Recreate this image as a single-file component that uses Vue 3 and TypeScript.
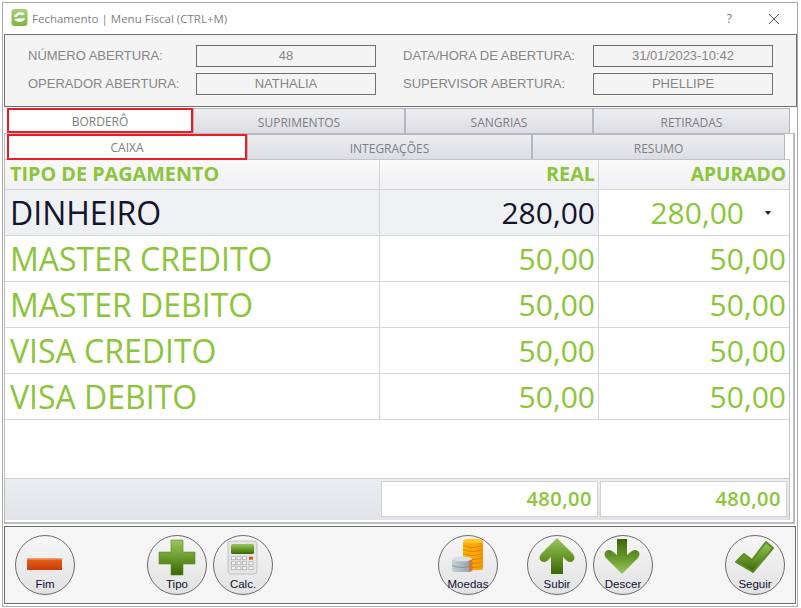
<script setup lang="ts">
interface Row { name: string; real: string; apurado: string }
const rows: Row[] = [
  { name: 'MASTER CREDITO', real: '50,00', apurado: '50,00' },
  { name: 'MASTER DEBITO', real: '50,00', apurado: '50,00' },
  { name: 'VISA CREDITO', real: '50,00', apurado: '50,00' },
  { name: 'VISA DEBITO', real: '50,00', apurado: '50,00' },
]
const tabs = [
  { label: 'BORDERÔ', w: 186, on: true },
  { label: 'SUPRIMENTOS', w: 212, on: false },
  { label: 'SANGRIAS', w: 188, on: false },
  { label: 'RETIRADAS', w: 197, on: false },
]
const subtabs = [
  { label: 'CAIXA', w: 240, on: true },
  { label: 'INTEGRAÇÕES', w: 285, on: false },
  { label: 'RESUMO', w: 253, on: false },
]
</script>

<template>
  <div class="page">
    <svg class="defs" width="0" height="0" aria-hidden="true">
      <defs>
        <linearGradient id="g" x1="0" y1="0" x2="0" y2="1">
          <stop offset="0" stop-color="#9cc65e" />
          <stop offset="0.5" stop-color="#689a2c" />
          <stop offset="1" stop-color="#3c6606" />
        </linearGradient>
        <linearGradient id="gd" x1="0" y1="0" x2="0" y2="1">
          <stop offset="0" stop-color="#3c6606" />
          <stop offset="0.55" stop-color="#689a2c" />
          <stop offset="1" stop-color="#9cc65e" />
        </linearGradient>
        <linearGradient id="r" x1="0" y1="0" x2="0" y2="1">
          <stop offset="0" stop-color="#e8641c" />
          <stop offset="1" stop-color="#c83c08" />
        </linearGradient>
        <linearGradient id="au" x1="0" y1="0" x2="1" y2="0">
          <stop offset="0" stop-color="#ffb400" />
          <stop offset="1" stop-color="#f79a0a" />
        </linearGradient>
        <linearGradient id="ag" x1="0" y1="0" x2="1" y2="0">
          <stop offset="0" stop-color="#c8d0d6" />
          <stop offset="1" stop-color="#8f9ea8" />
        </linearGradient>
        <linearGradient id="lg" x1="0" y1="0" x2="0" y2="1">
          <stop offset="0" stop-color="#a6d272" />
          <stop offset="1" stop-color="#7cb63e" />
        </linearGradient>
      </defs>
    </svg>
    <div class="window">
      <header class="title">
        <svg class="logo" width="17" height="17" viewBox="0 0 17 17">
          <rect width="16" height="17" x="0.5" rx="3" fill="url(#lg)" />
          <path d="M3 8 C4 3 11 2 14 5 L11 6.500 C9 5 6.500 6 6 8 Z M3 10 L14 9 C14 13 6 15 3 10 Z" fill="#fff" />
        </svg>
        <span class="title-text">Fechamento | Menu Fiscal (CTRL+M)</span>
        <span class="help">?</span>
        <svg class="close" width="12" height="12" viewBox="0 0 12 12">
          <path d="M1 1 L11 11 M11 1 L1 11" stroke="#666" stroke-width="1" fill="none" />
        </svg>
      </header>

      <section class="info">
        <span class="lbl l1">NÚMERO ABERTURA:</span>
        <span class="box">48</span>
        <span class="lbl l2">DATA/HORA DE ABERTURA:</span>
        <span class="box">31/01/2023-10:42</span>
        <span class="lbl l1">OPERADOR ABERTURA:</span>
        <span class="box">NATHALIA</span>
        <span class="lbl l2">SUPERVISOR ABERTURA:</span>
        <span class="box">PHELLIPE</span>
      </section>

      <nav class="tabs">
        <div v-for="t in tabs" :key="t.label" class="tab" :class="{ on: t.on }" :style="{ width: t.w + 'px' }">{{ t.label }}</div>
      </nav>

      <section class="outer">
        <nav class="subtabs">
          <div v-for="t in subtabs" :key="t.label" class="tab" :class="{ on: t.on }" :style="{ width: t.w + 'px' }">{{ t.label }}</div>
        </nav>
        <div class="grid">
          <div class="row head">
            <div class="cell a">TIPO DE PAGAMENTO</div>
            <div class="cell b">REAL</div>
            <div class="cell c">APURADO</div>
          </div>
          <div class="row body first">
            <div class="cell a">DINHEIRO</div>
            <div class="cell b">280,00</div>
            <div class="cell c edit"><span>280,00</span><i class="caret"></i></div>
          </div>
          <div v-for="r in rows" :key="r.name" class="row body">
            <div class="cell a">{{ r.name }}</div>
            <div class="cell b">{{ r.real }}</div>
            <div class="cell c">{{ r.apurado }}</div>
          </div>
          <div class="empty"></div>
          <div class="foot">
            <div class="total t1">480,00</div>
            <div class="total t2">480,00</div>
          </div>
        </div>
      </section>

      <footer class="actions">
        <button class="btn fim">
          <svg viewBox="0 0 60 60" width="60" height="60"><rect x="12" y="23" width="35" height="12" fill="url(#r)" /><rect x="12" y="23" width="35" height="1.500" fill="#f0a080" /></svg>
          <span>Fim</span>
        </button>
        <button class="btn tipo">
          <svg viewBox="0 0 60 60" width="60" height="60"><path d="M24 5 H36 V17 H48 V29 H36 V40 H24 V29 H12 V17 H24 Z" fill="url(#g)" stroke="#5d8c24" stroke-width="0.600" /></svg>
          <span>Tipo</span>
        </button>
        <button class="btn calc">
          <svg viewBox="0 0 60 60" width="60" height="60">
            <rect x="15" y="6" width="29" height="33" rx="3" fill="#e4e4e4" stroke="#c2c2c2" />
            <rect x="18" y="9" width="23" height="10" rx="1.500" fill="url(#g)" />
            <g fill="#f4f4f4" stroke="#a8a8a8" stroke-width="0.700">
              <rect x="18.500" y="21.700" width="4" height="3" /><rect x="24" y="21.700" width="4" height="3" /><rect x="29.500" y="21.700" width="4" height="3" />
              <rect x="18.500" y="26.700" width="4" height="3" /><rect x="24" y="26.700" width="4" height="3" /><rect x="29.500" y="26.700" width="4" height="3" /><rect x="36" y="26.700" width="4" height="3" />
              <rect x="18.500" y="31.700" width="4" height="3" /><rect x="24" y="31.700" width="4" height="3" /><rect x="29.500" y="31.700" width="4" height="3" /><rect x="36" y="31.700" width="4" height="3" />
            </g>
            <rect x="36" y="21.700" width="4" height="3" fill="#dd5a14" />
          </svg>
          <span>Calc.</span>
        </button>
        <button class="btn moedas">
          <svg viewBox="0 0 60 60" width="60" height="60">
            <rect x="25" y="6" width="20" height="29" rx="2" fill="url(#au)" />
            <ellipse cx="35" cy="6" rx="10" ry="2.500" fill="#ffc62e" />
            <path d="M25 10.500 q10 4 20 0 M25 14.500 q10 4 20 0 M25 18.500 q10 4 20 0 M25 22.500 q10 4 20 0 M25 26.500 q10 4 20 0 M25 30.500 q10 4 20 0" stroke="#d98400" stroke-width="1" fill="none" />
            <rect x="14" y="24" width="20" height="13" rx="2" fill="url(#ag)" />
            <ellipse cx="24" cy="24" rx="10" ry="2.500" fill="#d8dee2" />
            <path d="M14 30.500 q10 4 20 0" stroke="#7d8b95" stroke-width="0.800" fill="none" />
            <rect x="31" y="25" width="3.500" height="11" fill="#e56a1a" opacity="0.700" />
          </svg>
          <span>Moedas</span>
        </button>
        <button class="btn subir">
          <svg viewBox="0 0 60 60" width="60" height="60"><path d="M30 3 L46 19 Q49 23 46 26 Q43 28 40 26 L36 22 V39 H24 V22 L20 26 Q17 28 14 26 Q11 23 14 19 Z" fill="url(#g)" /></svg>
          <span>Subir</span>
        </button>
        <button class="btn descer">
          <svg viewBox="0 0 60 60" width="60" height="60"><path d="M24 4 H34 V20 L39 16 Q42 14 45 16 Q48 19 45 23 L29 39 L13 23 Q10 19 13 16 Q16 14 19 16 L24 20 Z" fill="url(#gd)" /></svg>
          <span>Descer</span>
        </button>
        <button class="btn seguir">
          <svg viewBox="0 0 60 60" width="60" height="60"><path d="M11 27 L19 19 L27 25 L41 7 L48 13 L28 37 Z" fill="url(#g)" stroke="#5d8c24" stroke-width="2" stroke-linejoin="round" /></svg>
          <span>Seguir</span>
        </button>
      </footer>
    </div>
  </div>
</template>

<style>
html, body { margin: 0; background: #fff; }
</style>

<style scoped>
.page {
  width: 801px;
  height: 608px;
  padding: 2px 3px 1px 2px;
  box-sizing: border-box;
  background: #fff;
  position: relative;
  overflow: hidden;
}
.defs { position: absolute; }
.window {
  height: 100%;
  box-sizing: border-box;
  border: 1px solid #ababab;
  padding: 0 0 2px 1px;
  display: flex;
  flex-direction: column;
}
.title {
  height: 31px;
  display: flex;
  align-items: center;
  padding-left: 7px;
  flex: none;
}
.logo { margin-bottom: 2px; }
.title-text {
  margin-left: 4px;
  font: 11.5px "Open Sans", sans-serif;
  color: #7f7f7f;
}
.help {
  margin-left: auto;
  font: 12px "Open Sans", sans-serif;
  color: #777;
}
.close { margin: 0 17px 0 36px; }
.info {
  flex: none;
  height: 73px;
  box-sizing: border-box;
  border: 1px solid #6f6f6f;
  background: #f4f4f4;
  display: grid;
  grid-template-columns: 168px 180px 217px 180px;
  grid-auto-rows: 22px;
  row-gap: 6px;
  padding: 10px 0 0 23px;
  font: 13px "Liberation Sans", sans-serif;
  color: #868686;
}
.lbl { line-height: 22px; white-space: nowrap; }
.l2 { padding-left: 27px; }
.box {
  border: 1px solid #6f6f6f;
  line-height: 20px;
  text-align: center;
}
.tabs {
  flex: none;
  display: flex;
  margin: 1px 0 0 3px;
  height: 25px;
  position: relative;
  z-index: 1;
}
.tab {
  box-sizing: border-box;
  flex: none;
  text-align: center;
  font: 12px/27px "Open Sans", sans-serif;
  color: #7d7d85;
  background: linear-gradient(#eeeef0, #dcdde2);
  border: 1px solid #b4b6c0;
  border-bottom: 0;
}
.tab.on {
  background: #fff;
  border: 2px solid #ed1c24;
  line-height: 23px;
  color: #7d7d7d;
}
.outer {
  flex: 1;
  min-height: 0;
  margin: 0 2px 2px 0;
  border: 1px solid #b9bac2;
  border-right-width: 2px;
  border-bottom-width: 2px;
  display: flex;
  flex-direction: column;
}
.subtabs {
  flex: none;
  display: flex;
  height: 25px;
  padding-left: 2px;
  position: relative;
  z-index: 1;
}
.subtabs .tab { height: 25px; line-height: 28px; }
.subtabs .tab.on { height: 26px; line-height: 23px; }
.grid {
  flex: 1;
  min-height: 0;
  margin: 0 3px 2px 0;
  border-top: 1px solid #c2c3cc;
  border-right: 1px solid #c2c3cc;
  display: flex;
  flex-direction: column;
  background: #fff;
  font-family: "Open Sans", sans-serif;
  color: #8ac53a;
}
.row {
  flex: none;
  box-sizing: border-box;
  display: grid;
  grid-template-columns: 374px 219px 1fr;
  border-bottom: 1px solid #d4d5dc;
}
.cell {
  padding: 0 3px 0 5px;
  white-space: nowrap;
  overflow: hidden;
}
.cell + .cell { text-align: right; border-left: 1px solid #d4d5dc; }
.head {
  height: 30px;
  background: linear-gradient(#f9f9fa, #f1f1f3);
  font-size: 19.8px;
  font-weight: 700;
  line-height: 28px;
}
.head .c { font-size: 19.2px; }
.body {
  height: 46px;
  font-size: 30px;
  line-height: 46px;
}
.body .a { font-size: 32px; }
.first .a, .first .b {
  background: #eef0f2;
  color: #14142e;
}
.edit {
  display: flex;
  justify-content: flex-end;
  align-items: center;
  padding-right: 18px;
}
.caret {
  margin-left: 21px;
  width: 0;
  height: 0;
  border: 3px solid transparent;
  border-top: 4px solid #222;
  border-bottom: 0;
}
.empty { flex: 1; }
.foot {
  flex: none;
  box-sizing: border-box;
  height: 42px;
  border-top: 1px solid #c9cad2;
  background: linear-gradient(#ecedf0, #e2e3e8);
  display: flex;
  padding: 2px 2px 3px 376px;
  gap: 2px;
}
.total {
  box-sizing: border-box;
  border: 1px solid #cfd0d8;
  background: #fff;
  text-align: right;
  font-size: 20px;
  font-weight: 600;
  letter-spacing: 0.5px;
  line-height: 34px;
  padding-right: 5px;
}
.t1 { width: 217px; }
.t2 { width: 187px; }
.actions {
  flex: none;
  height: 78px;
  box-sizing: border-box;
  border: 1px solid #6f6f6f;
  background: #f5f5f5;
  margin-right: 1px;
  display: flex;
  align-items: center;
  padding-left: 10px;
}
.btn {
  position: relative;
  width: 60px;
  height: 60px;
  flex: none;
  box-sizing: border-box;
  padding: 0;
  border: 1px solid #6a6a6a;
  border-radius: 50%;
  background: linear-gradient(#f6f6f6, #e2e2e2);
  font: 11.5px "Liberation Sans", sans-serif;
  color: #101030;
}
.btn svg {
  position: absolute;
  left: -1px;
  top: -1px;
}
.btn span {
  position: absolute;
  left: -10px;
  right: -10px;
  top: 41px;
  text-align: center;
  line-height: 14px;
}
.tipo { margin-left: 72px; }
.calc { margin-left: 6px; }
.moedas { margin-left: 165px; }
.subir { margin-left: 29px; }
.descer { margin-left: 6px; }
.seguir { margin-left: 72px; }
</style>
